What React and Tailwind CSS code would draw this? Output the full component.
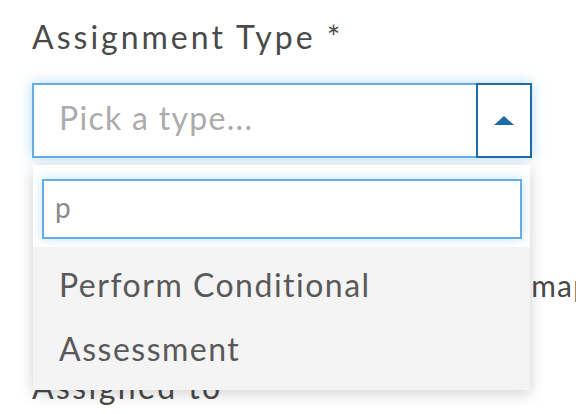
import { useState } from 'react';

export default function App() {
    const [query, setQuery] = useState('p');
    const options = ['Perform Conditional', 'Assessment'];

    return (
        <div className="w-[576px] h-[414px] overflow-hidden bg-white font-['Lato','Noto_Sans',sans-serif]">
            <div className="pl-[32px] pr-[44px] pt-[18px]">
                <label className="block text-[32px] leading-[38px] text-[#4a4a4a] tracking-[3px]">
                    Assignment Type *
                </label>

                <div className="relative mt-[27px]">
                    {/* closed select */}
                    <div className="flex h-[75px] shadow-[0_0_12px_rgba(93,173,233,0.45)]">
                        <div className="flex-1 flex items-center border-2 border-r-0 border-[#63aee8] bg-white pl-[25px] pb-[6px] text-[32px] leading-[38px] text-[#ababab] tracking-[1.3px]">
                            Pick a type...
                        </div>
                        <button className="w-[56px] flex items-center justify-center border-2 border-[#1d6ca8] bg-white">
                            <svg width="20" height="9" viewBox="0 0 20 9">
                                <polygon points="10,0 20,9 0,9" fill="#1d6ca8" />
                            </svg>
                        </button>
                    </div>

                    {/* open dropdown */}
                    <div className="absolute left-[1px] top-[82px] z-10 w-[497px] bg-[#f4f4f4] shadow-[0_4px_14px_rgba(0,0,0,0.18)]">
                        <div className="bg-white pl-[9px] pr-[8px] pt-[14px] pb-[8px]">
                            <input
                                value={query}
                                onChange={(e) => setQuery(e.target.value)}
                                className="w-full h-[60px] border-2 border-[#63aee8] bg-white pl-[11px] pb-[4px] text-[28px] text-[#8a8a8a] outline-none shadow-[0_0_10px_rgba(93,173,233,0.35)]"
                            />
                        </div>
                        <ul className="pt-[6px] pb-[9px]">
                            {options.map((opt) => (
                                <li key={opt} className="h-[64px] pl-[26px] text-[32px] leading-[64px] text-[#595959] tracking-[1.5px]">
                                    {opt}
                                </li>
                            ))}
                        </ul>
                    </div>
                </div>

                {/* content behind the menu */}
                <p className="mt-[109px] whitespace-nowrap text-[30px] leading-[36px] text-[#4a4a4a] tracking-[1.2px]">
                    Pick the type of work to do on the map
                </p>
                <label className="block mt-[65px] text-[32px] leading-[38px] text-[#4a4a4a] tracking-[2.4px]">
                    Assigned to
                </label>
            </div>
        </div>
    );
}
